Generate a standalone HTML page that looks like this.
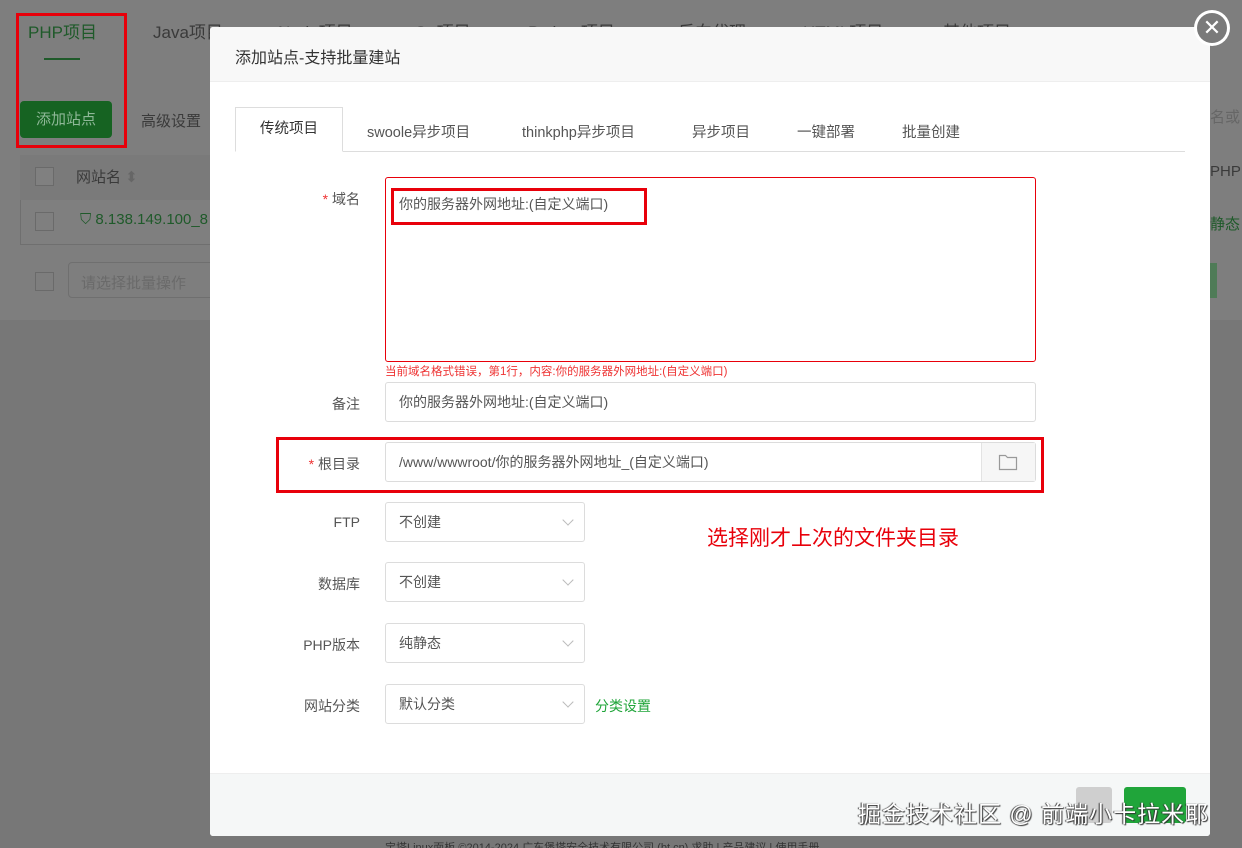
<!DOCTYPE html>
<html><head><meta charset="utf-8"><style>
*{box-sizing:border-box;margin:0;padding:0}
body{width:1242px;height:848px;overflow:hidden;background:#777;font-family:"Liberation Sans","Noto Sans CJK SC",sans-serif;font-size:14px;color:#333;position:relative}
.a{position:absolute}
.g{color:#3a3a3a}
.lbl{position:absolute;width:150px;text-align:right;left:210px;color:#555;font-size:14px}
.inp{position:absolute;left:385px;border:1px solid #dcdcdc;border-radius:3px;background:#fff;color:#555;padding-left:13px;font-size:14px}
.sel{width:200px;height:40px;line-height:38px}
.sel:after{content:"";position:absolute;right:12px;top:13px;width:7px;height:7px;border-right:1px solid #bbb;border-bottom:1px solid #bbb;transform:rotate(45deg)}
.red{position:absolute;border:3px solid #e8000a}
.tab{position:absolute;top:121px;color:#555;font-size:14.5px}
</style></head><body>
<div class="a" style="left:0;top:0;width:1242px;height:320px;background:#7e7e7e"></div>
<div class="a" style="left:28px;top:18px;font-size:17px;color:#1f5a2a">PHP项目</div>
<div class="a" style="left:44px;top:58px;width:36px;height:2px;background:#1f5a2a"></div>
<div class="a g" style="left:153px;top:18px;font-size:17px">Java项目</div>
<div class="a g" style="left:278px;top:18px;font-size:17px">Node项目</div>
<div class="a g" style="left:414px;top:18px;font-size:17px">Go项目</div>
<div class="a g" style="left:528px;top:18px;font-size:17px">Python项目</div>
<div class="a g" style="left:678px;top:18px;font-size:17px">反向代理</div>
<div class="a g" style="left:803px;top:18px;font-size:17px">HTML项目</div>
<div class="a g" style="left:943px;top:18px;font-size:17px">其他项目</div>
<div class="a" style="left:20px;top:101px;width:92px;height:37px;background:#166322;border-radius:4px;color:#8fb898;text-align:center;line-height:37px;font-size:15px">添加站点</div>
<div class="a g" style="left:141px;top:110px;font-size:15px">高级设置</div>
<div class="a" style="left:20px;top:155px;width:200px;height:90px;border:1px solid #6f6f6f;background:#7f7f7f"></div>
<div class="a" style="left:20px;top:155px;width:200px;height:45px;background:#7a7a7a"></div>
<div class="a" style="left:35px;top:167px;width:19px;height:19px;border:1px solid #6a6a6a;background:#808080"></div>
<div class="a g" style="left:76px;top:166px;font-size:15px">网站名 <span style="color:#666">⬍</span></div>
<div class="a" style="left:35px;top:212px;width:19px;height:19px;border:1px solid #6a6a6a"></div>
<div class="a" style="left:80px;top:211px;font-size:15px;color:#1f5a2a">⛉ 8.138.149.100_8</div>
<div class="a" style="left:35px;top:272px;width:19px;height:19px;border:1px solid #6a6a6a"></div>
<div class="a" style="left:68px;top:262px;width:150px;height:36px;border:1px solid #6f6f6f;border-radius:4px;color:#6a6a6a;padding:9px 12px;font-size:15px">请选择批量操作</div>
<div class="a" style="left:1210px;top:100px;width:32px;height:36px;color:#666;font-size:15px;line-height:36px;overflow:hidden">名或</div>
<div class="a" style="left:1210px;top:163px;color:#3a3a3a;font-size:15px">PHP</div>
<div class="a" style="left:1210px;top:213px;color:#1f5a2a;font-size:15px">静态</div>
<div class="a" style="left:1210px;top:263px;width:7px;height:35px;background:#4f7b57"></div>
<div class="a" style="left:385px;top:838px;width:800px;height:10px;color:#333;font-size:11px;overflow:hidden;line-height:20px">宝塔Linux面板 ©2014-2024 广东堡塔安全技术有限公司 (bt.cn) 求助 | 产品建议 | 使用手册</div>
<div class="red" style="left:16px;top:13px;width:111px;height:135px"></div>
<div class="a" style="left:210px;top:27px;width:1000px;height:809px;background:#fff;border-radius:3px;overflow:hidden">
 <div class="a" style="left:0;top:0;width:1000px;height:55px;background:#f8f8f8;border-bottom:1px solid #eee;padding:17px 25px;font-size:16px;color:#333">添加站点-支持批量建站</div>
 <div class="a" style="left:0;top:746px;width:1000px;height:63px;background:#f5f7f7;border-top:1px solid #eee"></div>
 <div class="a" style="left:866px;top:760px;width:36px;height:36px;background:#cfcfcf;border-radius:3px"></div>
 <div class="a" style="left:914px;top:760px;width:62px;height:36px;background:#20a53a;border-radius:3px"></div>
</div>
<div class="a" style="left:235px;top:151px;width:950px;height:1px;background:#ddd"></div>
<div class="a" style="left:235px;top:107px;width:108px;height:45px;border:1px solid #ddd;border-bottom:1px solid #fff;background:#fff;text-align:center;line-height:43px;color:#333;font-size:14.5px">传统项目</div>
<div class="tab" style="left:367px">swoole异步项目</div>
<div class="tab" style="left:522px">thinkphp异步项目</div>
<div class="tab" style="left:692px">异步项目</div>
<div class="tab" style="left:797px">一键部署</div>
<div class="tab" style="left:902px">批量创建</div>
<div class="lbl" style="top:189px"><span style="color:#e33">*</span> 域名</div>
<div class="a" style="left:385px;top:177px;width:651px;height:185px;border:1px solid #e8000a;border-radius:3px"></div>
<div class="a" style="left:399px;top:194px;color:#555">你的服务器外网地址:(自定义端口)</div>
<div class="red" style="left:391px;top:188px;width:256px;height:37px"></div>
<div class="a" style="left:385px;top:363px;color:#e33;font-size:11.5px">当前域名格式错误，第1行，内容:你的服务器外网地址:(自定义端口)</div>
<div class="lbl" style="top:394px">备注</div>
<div class="inp" style="top:382px;width:651px;height:40px;line-height:38px">你的服务器外网地址:(自定义端口)</div>
<div class="lbl" style="top:454px"><span style="color:#e33">*</span> 根目录</div>
<div class="inp" style="top:442px;width:651px;height:40px;line-height:38px">/www/wwwroot/你的服务器外网地址_(自定义端口)</div>
<div class="a" style="left:981px;top:443px;width:54px;height:38px;background:#f6f6f6;border-left:1px solid #e3e3e3"></div>
<svg class="a" style="left:998px;top:453px" width="20" height="18" viewBox="0 0 20 18"><path d="M1.5 2.5h6l2 2h9v12h-17z" fill="none" stroke="#999" stroke-width="1.2"/></svg>
<div class="red" style="left:276px;top:437px;width:768px;height:56px"></div>
<div class="lbl" style="top:514px">FTP</div>
<div class="inp sel" style="top:502px">不创建</div>
<div class="a" style="left:707px;top:522px;color:#e8000a;font-size:21px">选择刚才上次的文件夹目录</div>
<div class="lbl" style="top:574px">数据库</div>
<div class="inp sel" style="top:562px">不创建</div>
<div class="lbl" style="top:635px">PHP版本</div>
<div class="inp sel" style="top:623px">纯静态</div>
<div class="lbl" style="top:696px">网站分类</div>
<div class="inp sel" style="top:684px">默认分类</div>
<div class="a" style="left:595px;top:696px;color:#20a53a">分类设置</div>
<div class="a" style="left:1194px;top:10px;width:36px;height:36px;border-radius:50%;background:#fff;"></div>
<div class="a" style="left:1197px;top:13px;width:30px;height:30px;border-radius:50%;background:#7a7a7a;color:#fff;text-align:center;line-height:29px;font-size:22px">✕</div>
<div class="a" style="left:858px;top:795px;font-size:23px;letter-spacing:1px;color:#fff;text-shadow:1px 1px 1px #333,-1px 0 1px #333">掘金技术社区 @ 前端小卡拉米耶</div>
</body></html>
